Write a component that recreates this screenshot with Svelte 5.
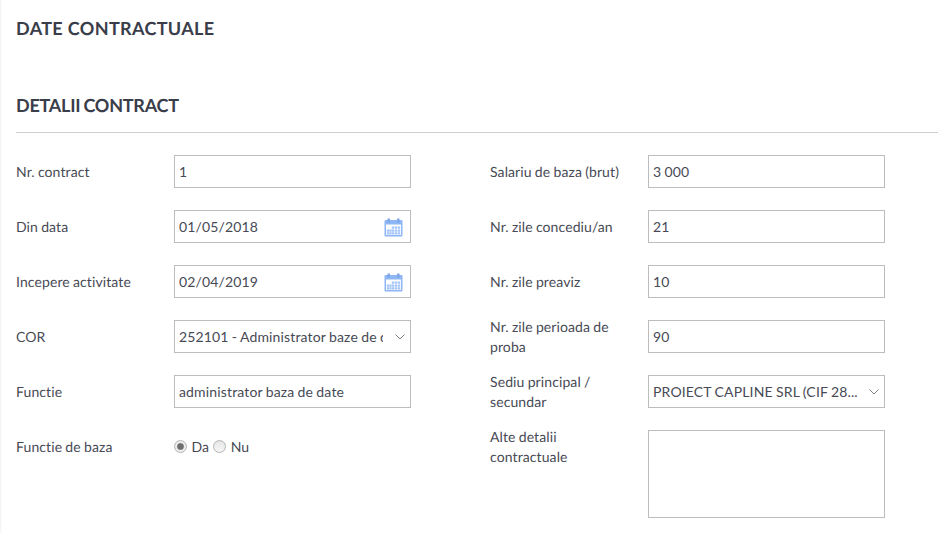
<script>
	const leftRows = [
		{ label: 'Nr. contract', type: 'text', value: '1' },
		{ label: 'Din data', type: 'date', value: '01/05/2018' },
		{ label: 'Incepere activitate', type: 'date', value: '02/04/2019' },
		{ label: 'COR', type: 'select', value: '252101 - Administrator baze de date' },
		{ label: 'Functie', type: 'text', value: 'administrator baza de date' },
		{ label: 'Functie de baza', type: 'radio' }
	];

	const rightRows = [
		{ label: 'Salariu de baza (brut)', type: 'text', value: '3 000' },
		{ label: 'Nr. zile concediu/an', type: 'text', value: '21' },
		{ label: 'Nr. zile preaviz', type: 'text', value: '10' },
		{ label: 'Nr. zile perioada de proba', type: 'text', value: '90' },
		{ label: 'Sediu principal / secundar', type: 'select', value: 'PROIECT CAPLINE SRL (CIF 28...' },
		{ label: 'Alte detalii contractuale', type: 'textarea' }
	];

	const columns = [leftRows, rightRows];
</script>

<div class="page">
	<h1>DATE CONTRACTUALE</h1>
	<h2>DETALII CONTRACT</h2>

	<div class="columns">
		{#each columns as rows}
			<div class="column">
				{#each rows as row}
					<div class="row" class:tall={row.type === 'textarea'}>
						<span class="label">{row.label}</span>
						{#if row.type === 'text'}
							<input class="field" type="text" value={row.value} />
						{:else if row.type === 'date'}
							<div class="date">
								<input class="field" type="text" value={row.value} />
								<svg class="cal" viewBox="0 0 19 19" width="19" height="19">
									<rect x="0.5" y="2" width="18" height="16.5" rx="1" fill="#8fb6f5" />
									<rect x="3.5" y="0.5" width="2.5" height="4" fill="#7ea6ea" />
									<rect x="13" y="0.5" width="2.5" height="4" fill="#7ea6ea" />
									<path d="M2 6.5h15V17H2z" fill="#fff" />
									<path d="M7.8 8.4h2.4v2.4H7.8zM10.8 8.4h2.4v2.4h-2.4zM13.8 8.4h2.4v2.4h-2.4zM2.8 11.4h2.2v2.4H2.8zM5.3 11.4h2.2v2.4H5.3zM7.8 11.4h2.4v2.4H7.8zM10.8 11.4h2.4v2.4h-2.4zM13.8 11.4h2.4v2.4h-2.4zM2.8 14.2h2.2v2.3H2.8zM5.3 14.2h2.2v2.3H5.3zM7.8 14.2h2.4v2.3H7.8zM10.8 14.2h2.4v2.3h-2.4zM13.8 14.2h2.4v2.3h-2.4z" fill="#a3c4f8" />
								</svg>
							</div>
						{:else if row.type === 'select'}
							<select class="field select">
								<option>{row.value}</option>
							</select>
						{:else if row.type === 'textarea'}
							<textarea class="field area"></textarea>
						{:else}
							<div class="radios">
								<label><input type="radio" name="baza" checked /> Da</label>
								<label><input type="radio" name="baza" /> Nu</label>
							</div>
						{/if}
					</div>
				{/each}
			</div>
		{/each}
	</div>
</div>

<style>
	:global(body) {
		margin: 0;
		background: #fff;
	}

	.page {
		height: 533px;
		box-sizing: border-box;
		padding: 17px 0 0 16px;
		overflow: hidden;
		font-family: Lato, sans-serif;
		font-size: 14px;
		font-variant-ligatures: none;
		text-rendering: geometricPrecision;
		letter-spacing: 0.1px;
		word-spacing: -0.5px;
		color: #474a55;
		box-shadow: inset 2px 0 2px -1px #f2f2f2;
	}

	h1, h2 {
		margin: 0;
		font-size: 18px;
		font-weight: 700;
		line-height: 22px;
		color: #3a3d4a;
	}

	h1 {
		letter-spacing: 0.35px;
		word-spacing: 0;
	}

	h2 {
		margin-top: 55px;
		padding-bottom: 16px;
		border-bottom: 1px solid #d0d0d0;
		letter-spacing: -0.25px;
		word-spacing: -1px;
	}

	.columns {
		display: flex;
		gap: 79px;
		margin-top: 22px;
	}

	.column {
		display: flex;
		flex-direction: column;
		gap: 22px;
		width: 395px;
	}

	.row {
		display: flex;
		align-items: center;
		height: 33px;
	}

	.row.tall {
		align-items: flex-start;
		height: 88px;
	}

	.label {
		width: 158px;
		flex: none;
		box-sizing: border-box;
		padding-right: 20px;
		line-height: 20px;
	}

	.tall .label {
		margin-top: -3px;
	}

	.field {
		width: 237px;
		height: 33px;
		box-sizing: border-box;
		margin: 0;
		padding: 0 4px;
		border: 1px solid #bdbdbd;
		border-radius: 0;
		outline: none;
		background: #fff;
		font: inherit;
		letter-spacing: 0.15px;
		word-spacing: -0.5px;
		color: inherit;
	}

	.date {
		position: relative;
		display: flex;
	}

	.cal {
		position: absolute;
		right: 8px;
		top: 8px;
	}

	.select {
		appearance: none;
		padding-right: 27px;
		background-image: url("data:image/svg+xml,%3Csvg xmlns='http://www.w3.org/2000/svg' width='10' height='6'%3E%3Cpath d='M.5.5 5 5 9.5.5' fill='none' stroke='%23808080'/%3E%3C/svg%3E");
		background-repeat: no-repeat;
		background-position: right 5px center;
	}

	.area {
		height: 88px;
		display: block;
		resize: none;
	}

	.radios {
		display: flex;
		gap: 4px;
		align-items: center;
	}

	.radios label {
		display: flex;
		align-items: center;
		gap: 4.5px;
	}

	.radios input {
		appearance: none;
		width: 13px;
		height: 13px;
		margin: 0;
		border: 1px solid #b4b4b4;
		border-radius: 50%;
		background: linear-gradient(#e6e6e6, #f6f6f6);
	}

	.radios input:checked {
		background: radial-gradient(circle, #6e6e6e 0 2.8px, #ececec 4px);
	}
</style>
